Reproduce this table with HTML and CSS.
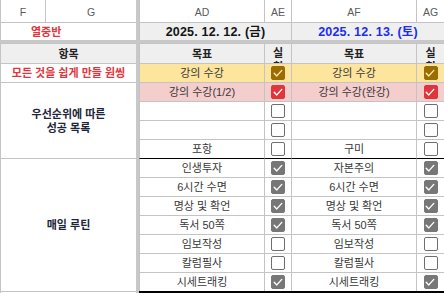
FILE: index.html
```html
<!DOCTYPE html>
<html lang="ko">
<head>
<meta charset="utf-8">
<link rel="stylesheet" href="styles.css">
</head>
<body>
<div class="sheet">
  <div class="vbar"></div>
  <div class="hbar"></div>

  <div class="c colhead nt">F</div>
  <div class="c colhead nt">G</div>
  <div class="c colhead nt">AD</div>
  <div class="c colhead nt">AE</div>
  <div class="c colhead nt">AF</div>
  <div class="c colhead nt">AG</div>

  <div class="c span2 red title-shift">열중반</div>
  <div class="c span2 gray date">2025. 12. 12. (금)</div>
  <div class="c span2 gray date blue">2025. 12. 13. (토)</div>

  <div class="c span2 gray bold">항목</div>
  <div class="c gray bold">목표</div>
  <div class="c gray bold top"><span class="wrap">실천</span></div>
  <div class="c gray bold">목표</div>
  <div class="c gray bold top"><span class="wrap">실천</span></div>

  <div class="c span2 red">모든 것을 쉽게 만들 원씽</div>
  <div class="c yellow">강의 수강</div>
  <div class="c yellow"><span class="cb brown"><svg viewBox="0 0 14 14"><path d="M3.2 7.3 L5.8 9.9 L10.8 4.4"/></svg></span></div>
  <div class="c yellow">강의 수강</div>
  <div class="c yellow"><span class="cb brown"><svg viewBox="0 0 14 14"><path d="M3.2 7.3 L5.8 9.9 L10.8 4.4"/></svg></span></div>

  <div class="c span2 rows4 navy">우선순위에 따른<br>성공 목록</div>
  <div class="c pink">강의 수강(1/2)</div>
  <div class="c pink"><span class="cb redbox"><svg viewBox="0 0 14 14"><path d="M3.2 7.3 L5.8 9.9 L10.8 4.4"/></svg></span></div>
  <div class="c pink">강의 수강(완강)</div>
  <div class="c pink"><span class="cb redbox"><svg viewBox="0 0 14 14"><path d="M3.2 7.3 L5.8 9.9 L10.8 4.4"/></svg></span></div>

  <div class="c"></div>
  <div class="c"><span class="cb"></span></div>
  <div class="c"></div>
  <div class="c"><span class="cb"></span></div>

  <div class="c"></div>
  <div class="c"><span class="cb"></span></div>
  <div class="c"></div>
  <div class="c"><span class="cb"></span></div>

  <div class="c">포항</div>
  <div class="c"><span class="cb"></span></div>
  <div class="c">구미</div>
  <div class="c"><span class="cb"></span></div>

  <div class="c span2 rows7 navy">매일 루틴</div>
  <div class="c black-top">인생투자</div>
  <div class="c black-top"><span class="cb grey"><svg viewBox="0 0 14 14"><path d="M3.2 7.3 L5.8 9.9 L10.8 4.4"/></svg></span></div>
  <div class="c black-top">자본주의</div>
  <div class="c black-top"><span class="cb grey"><svg viewBox="0 0 14 14"><path d="M3.2 7.3 L5.8 9.9 L10.8 4.4"/></svg></span></div>

  <div class="c">6시간 수면</div>
  <div class="c"><span class="cb grey"><svg viewBox="0 0 14 14"><path d="M3.2 7.3 L5.8 9.9 L10.8 4.4"/></svg></span></div>
  <div class="c">6시간 수면</div>
  <div class="c"><span class="cb grey"><svg viewBox="0 0 14 14"><path d="M3.2 7.3 L5.8 9.9 L10.8 4.4"/></svg></span></div>

  <div class="c">명상 및 확언</div>
  <div class="c"><span class="cb grey"><svg viewBox="0 0 14 14"><path d="M3.2 7.3 L5.8 9.9 L10.8 4.4"/></svg></span></div>
  <div class="c">명상 및 확언</div>
  <div class="c"><span class="cb grey"><svg viewBox="0 0 14 14"><path d="M3.2 7.3 L5.8 9.9 L10.8 4.4"/></svg></span></div>

  <div class="c">독서 50쪽</div>
  <div class="c"><span class="cb grey"><svg viewBox="0 0 14 14"><path d="M3.2 7.3 L5.8 9.9 L10.8 4.4"/></svg></span></div>
  <div class="c">독서 50쪽</div>
  <div class="c"><span class="cb grey"><svg viewBox="0 0 14 14"><path d="M3.2 7.3 L5.8 9.9 L10.8 4.4"/></svg></span></div>

  <div class="c">임보작성</div>
  <div class="c"><span class="cb"></span></div>
  <div class="c">임보작성</div>
  <div class="c"><span class="cb"></span></div>

  <div class="c">칼럼필사</div>
  <div class="c"><span class="cb"></span></div>
  <div class="c">칼럼필사</div>
  <div class="c"><span class="cb"></span></div>

  <div class="c">시세트래킹</div>
  <div class="c"><span class="cb grey"><svg viewBox="0 0 14 14"><path d="M3.2 7.3 L5.8 9.9 L10.8 4.4"/></svg></span></div>
  <div class="c">시세트래킹</div>
  <div class="c"><span class="cb grey"><svg viewBox="0 0 14 14"><path d="M3.2 7.3 L5.8 9.9 L10.8 4.4"/></svg></span></div>

  <div class="c span2 foot-left"></div>
  <div class="foot-right"></div>
</div>
</body>
</html>
```

FILE: styles.css
```css
html, body {
  margin: 0;
  padding: 0;
  background: #ffffff;
}

body {
  width: 444px;
  height: 293px;
  overflow: hidden;
  font-family: "Liberation Sans", "Noto Sans CJK KR", sans-serif;
}

.sheet {
  display: grid;
  grid-template-columns: 45px 91px 3px 125px 27px 125px 28px;
  grid-template-rows: 22px 18px 3px 20px repeat(12, 19px) 2px;
  width: 444px;
  height: 293px;
}

.vbar {
  grid-column: 3;
  grid-row: 1 / -1;
  background: #c8c8c8;
}

.hbar {
  grid-column: 1 / -1;
  grid-row: 3;
  background: #c8c8c8;
}

.c {
  border-left: 1px solid #c4c4c4;
  border-top: 1px solid #c4c4c4;
  display: flex;
  align-items: center;
  justify-content: center;
  font-size: 11px;
  line-height: 14px;
  color: #383838;
  overflow: hidden;
  white-space: nowrap;
  min-width: 0;
  min-height: 0;
}

.nt {
  border-top: none;
}

.colhead {
  color: #5a5a5a;
  font-size: 10.5px;
  padding-top: 1px;
}

.span2 {
  grid-column: span 2;
}

.rows4 {
  grid-row: span 4;
}

.rows7 {
  grid-row: span 7;
}

.gray {
  background: #efefef;
}

.yellow {
  background: #fde59d;
}

.pink {
  background: #f4cdcd;
}

.bold {
  font-weight: bold;
  color: #222222;
}

.red {
  color: #e3343c;
  font-weight: bold;
}

.title-shift {
  justify-content: flex-start;
  padding-left: 30px;
}

.date {
  font-weight: bold;
  font-size: 12.5px;
  color: #141414;
  letter-spacing: 0.2px;
}

.date.blue {
  color: #1c2cf2;
}

.top {
  align-items: flex-start;
  padding-top: 2px;
}

.wrap {
  display: inline-block;
  width: 12px;
  white-space: normal;
  word-break: break-all;
  text-align: center;
}

.navy {
  color: #1d2538;
  font-weight: bold;
  white-space: normal;
  text-align: center;
  line-height: 14px;
}

.black-top {
  border-top-color: #000000;
}

.cb {
  box-sizing: border-box;
  width: 14px;
  height: 14px;
  border: 1.5px solid #6e6e6e;
  border-radius: 2px;
  background: #ffffff;
  display: block;
  position: relative;
}

.cb svg {
  position: absolute;
  left: -1.5px;
  top: -1.5px;
  width: 14px;
  height: 14px;
}

.cb path {
  fill: none;
  stroke: #ffffff;
  stroke-width: 1.4;
  stroke-linecap: round;
  stroke-linejoin: round;
}

.cb.grey {
  background: #777777;
  border-color: #777777;
}

.cb.brown {
  background: #9b6d00;
  border-color: #9b6d00;
}

.cb.brown path {
  stroke: #fbe8b4;
}

.cb.redbox {
  background: #e0353b;
  border-color: #e0353b;
}

.foot-left {
  border-top: 1px solid #c4c4c4;
}

.foot-right {
  grid-column: 4 / 8;
  background: #000000;
}
```
